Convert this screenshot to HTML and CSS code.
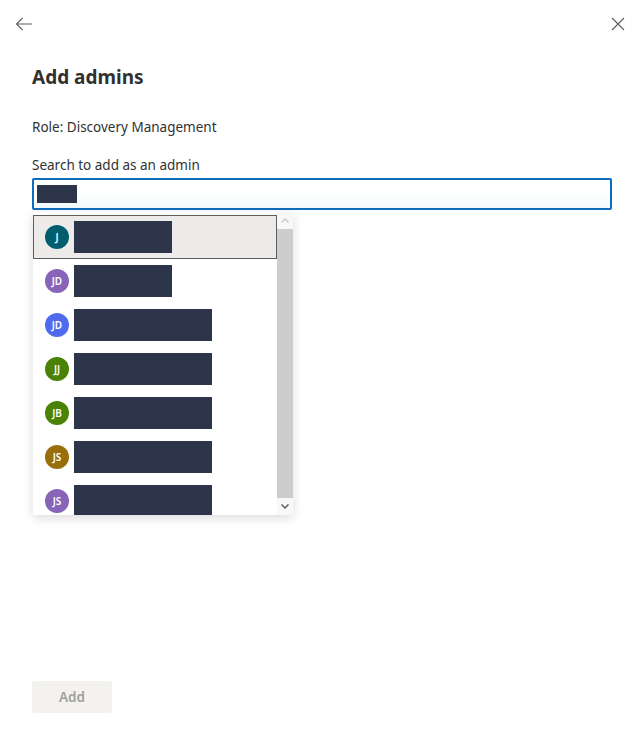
FILE: index.html
```html
<!DOCTYPE html>
<html>
  <head>
    <title>Add admins</title>
    <link rel="stylesheet" href="styles.css">
  </head>
  <body>
    <div class="panel">
      <div class="topbar">
        <button class="icon-button" aria-label="Back">
          <svg width="18" height="14" viewBox="0 0 18 14"><path d="M17 7H1.5M7.5 1L1.5 7l6 6" fill="none" stroke="#605e5c" stroke-width="1.1"/></svg>
        </button>
        <button class="icon-button" aria-label="Close">
          <svg width="14" height="14" viewBox="0 0 14 14"><path d="M1 1l12 12M13 1L1 13" fill="none" stroke="#605e5c" stroke-width="1.1"/></svg>
        </button>
      </div>

      <div class="content">
        <h1>Add admins</h1>
        <p class="role">Role: Discovery Management</p>

        <label class="field-label" for="search">Search to add as an admin</label>
        <div class="search-wrap">
          <div class="search-box" id="search">
            <span class="redacted redacted-query"></span>
          </div>

          <!-- Suggestions dropdown -->
          <div class="suggestions">
            <ul class="suggestion-list">
              <li class="suggestion selected">
                <span class="avatar teal">J</span>
                <span class="redacted short"></span>
              </li>
              <li class="suggestion">
                <span class="avatar purple">JD</span>
                <span class="redacted short"></span>
              </li>
              <li class="suggestion">
                <span class="avatar blue">JD</span>
                <span class="redacted long"></span>
              </li>
              <li class="suggestion">
                <span class="avatar green">JJ</span>
                <span class="redacted long"></span>
              </li>
              <li class="suggestion">
                <span class="avatar green">JB</span>
                <span class="redacted long"></span>
              </li>
              <li class="suggestion">
                <span class="avatar gold">JS</span>
                <span class="redacted long"></span>
              </li>
              <li class="suggestion">
                <span class="avatar purple">JS</span>
                <span class="redacted long"></span>
              </li>
            </ul>
            <div class="scrollbar">
              <span class="scroll-arrow">
                <svg width="8" height="5" viewBox="0 0 8 5"><path d="M0.5 4.5L4 1l3.5 3.5" fill="none" stroke="#c8c6c4" stroke-width="1.3"/></svg>
              </span>
              <span class="scroll-thumb"></span>
              <span class="scroll-arrow">
                <svg width="8" height="5" viewBox="0 0 8 5"><path d="M0.5 0.5L4 4l3.5-3.5" fill="none" stroke="#605e5c" stroke-width="1.5"/></svg>
              </span>
            </div>
          </div>
        </div>
      </div>

      <div class="footer">
        <button class="primary" disabled>Add</button>
      </div>
    </div>
  </body>
</html>
```

FILE: styles.css
```css
body {
  margin: 0;
  background-color: #fff;
  font-family: "Segoe UI", "Noto Sans", sans-serif;
  color: #323130;
}

.panel {
  height: 730px;
  display: flex;
  flex-direction: column;
}

.topbar {
  display: flex;
  justify-content: space-between;
  padding: 16px 17px 0 15px;
}

.icon-button {
  background: none;
  border: none;
  padding: 0;
  width: 18px;
  height: 16px;
  display: flex;
  align-items: center;
  justify-content: center;
}

.content {
  padding: 0 32px;
  flex: 1;
}

h1 {
  margin: 32px 0 0;
  font-size: 19px;
  font-weight: 700;
  line-height: 26px;
}

.role {
  margin: 27px 0 0;
  font-size: 13.5px;
  line-height: 20px;
}

.field-label {
  display: block;
  margin-top: 18px;
  font-size: 13.5px;
  line-height: 20px;
}

.search-wrap {
  position: relative;
  margin-top: 3px;
}

.search-box {
  height: 28px;
  border: 2px solid #0f6cbd;
  border-radius: 2px;
  background: linear-gradient(#fff 40%, #f1fcfe);
  display: flex;
  align-items: center;
  padding-left: 3px;
}

.redacted {
  display: block;
  background-color: #2c3549;
}

.redacted-query {
  width: 40px;
  height: 18px;
}

/* Dropdown with suggestions */
.suggestions {
  position: absolute;
  top: 34px;
  left: 1px;
  width: 260px;
  height: 303px;
  display: flex;
  background-color: #fff;
  box-shadow: 0 3px 10px rgba(0, 0, 0, 0.14);
}

.suggestion-list {
  list-style: none;
  margin: 0;
  padding: 3px 0 0;
  flex: 1;
  overflow: hidden;
}

.suggestion {
  height: 44px;
  box-sizing: border-box;
  display: flex;
  align-items: center;
  padding-left: 11px;
  border: 1px solid transparent;
}

.suggestion.selected {
  background-color: #edebe9;
  border-color: #605e5c;
}

.avatar {
  width: 24px;
  height: 24px;
  border-radius: 50%;
  color: #fff;
  font-size: 10px;
  font-weight: 600;
  display: flex;
  align-items: center;
  justify-content: center;
  margin-right: 5px;
}

.teal { background-color: #005e6f; }
.purple { background-color: #8764b8; }
.blue { background-color: #4f6bed; }
.green { background-color: #498205; }
.gold { background-color: #986f0b; }

.redacted.short {
  width: 98px;
  height: 32px;
}

.redacted.long {
  width: 138px;
  height: 32px;
}

.scrollbar {
  width: 16px;
  display: flex;
  flex-direction: column;
  background-color: #f8f8f8;
}

.scroll-arrow {
  height: 17px;
  display: flex;
  align-items: center;
  justify-content: center;
}

.scroll-thumb {
  flex: 1;
  background-color: #cdcdcd;
}

.footer {
  padding: 0 32px 17px;
}

.primary {
  width: 80px;
  height: 32px;
  border: none;
  border-radius: 2px;
  background-color: #f3f2f1;
  color: #a19f9d;
  font-family: inherit;
  font-size: 13.5px;
  font-weight: 600;
}
```
